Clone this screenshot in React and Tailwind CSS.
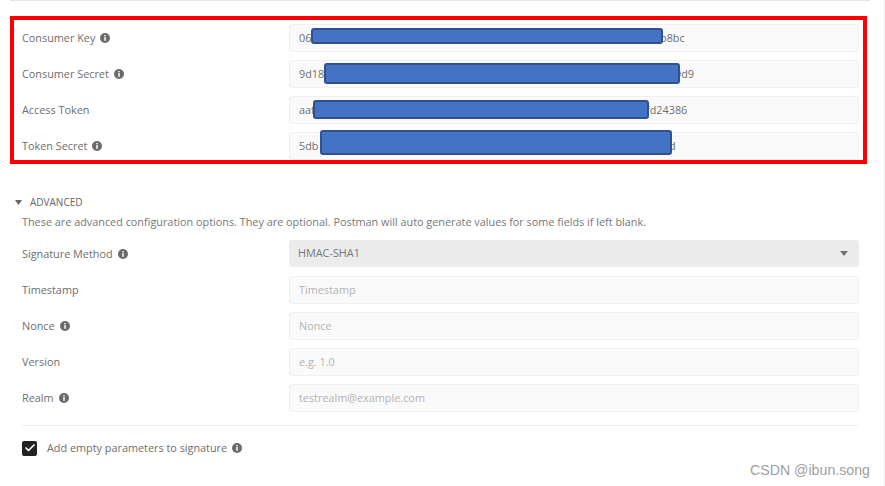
import { Check } from "lucide-react";

const CREDENTIALS = [
    { label: "Consumer Key", value: "06", end: "b8bc", info: true, width: "w-[361px]" },
    { label: "Consumer Secret", value: "9d18", end: "9d9", info: true, width: "w-[376px]" },
    { label: "Access Token", value: "aaf", end: "fd24386", info: false, width: "w-[347px]" },
    { label: "Token Secret", value: "5db", end: "d", info: true, width: "w-[370px]" },
];

const REDACTIONS = [
    "left-[311px] top-[28px] w-[352px] h-[16px]",
    "left-[324px] top-[63px] w-[356px] h-[21px]",
    "left-[313px] top-[100px] w-[336px] h-[19px]",
    "left-[320px] top-[130px] w-[352px] h-[25px]",
];

const ADVANCED = [
    { label: "Timestamp", placeholder: "Timestamp", info: false },
    { label: "Nonce", placeholder: "Nonce", info: true },
    { label: "Version", placeholder: "e.g. 1.0", info: false },
    { label: "Realm", placeholder: "testrealm@example.com", info: true },
];

const InfoIcon = () => (
    <svg width="10" height="10" viewBox="0 0 11 11" className="ml-[5px] shrink-0">
        <circle cx="5.5" cy="5.5" r="5.5" fill="#6b6b6b" />
        <rect x="4.7" y="2.2" width="1.6" height="1.4" fill="#fff" />
        <rect x="4.7" y="4.4" width="1.6" height="4.2" fill="#fff" />
    </svg>
);

const Row = ({ label, info, children }) => (
    <div className="flex h-7 mb-2 items-center">
        <div className="w-[267px] flex items-center text-[#6e6e6e]">
            <span>{label}</span>
            {info && <InfoIcon />}
        </div>
        {children}
    </div>
);

const FieldBox = ({ children, className = "text-[#6e6e6e]" }) => (
    <div className={`w-[570px] h-7 px-[9px] flex items-center bg-[#fafafa] border border-[#f0f0f0] rounded-[3px] ${className}`}>
        {children}
    </div>
);

export default function App() {
    return (
        <div className="relative w-[885px] h-[486px] overflow-hidden bg-white text-[10.85px] font-['Open_Sans',sans-serif] border-r border-[#ededed]">
            <div className="ml-[10px] w-[860px] h-px bg-[#e6e6e6]" />

            <div className="ml-[10px] mt-[15px] w-[857px] h-[148px] border-4 border-[#fe0000] pl-[8px] pt-[4px] overflow-hidden">
                {CREDENTIALS.map((row) => (
                    <Row key={row.label} label={row.label} info={row.info}>
                        <FieldBox>
                            <span className={row.width}>{row.value}</span>
                            <span>{row.end}</span>
                        </FieldBox>
                    </Row>
                ))}
            </div>

            <div className="ml-[15px] mt-[32px] flex items-center h-3 text-[#666666]">
                <svg width="7" height="5" viewBox="0 0 7 5">
                    <path d="M0 0h7L3.5 5z" fill="#666666" />
                </svg>
                <span className="ml-2 text-[10px] font-medium">ADVANCED</span>
            </div>
            <p className="ml-[22px] mt-[5px] h-[17px] leading-[17px] text-[#777777]">
                These are advanced configuration options. They are optional. Postman will auto generate values for some fields if left blank.
            </p>

            <div className="ml-[22px] mt-[10px]">
                <Row label="Signature Method" info>
                    <div className="w-[570px] h-[27px] -mt-px pl-[9px] pr-[11px] flex items-center justify-between bg-[#ececec] rounded-[3px] text-[#777777]">
                        <span>HMAC-SHA1</span>
                        <svg width="8" height="5" viewBox="0 0 8 5">
                            <path d="M0 0h8L4 5z" fill="#707070" />
                        </svg>
                    </div>
                </Row>
                {ADVANCED.map((row) => (
                    <Row key={row.label} label={row.label} info={row.info}>
                        <FieldBox className="text-[#b3b3b3]">{row.placeholder}</FieldBox>
                    </Row>
                ))}
                <div className="w-[837px] h-px mt-[13px] bg-[#eeeeee]" />
                <div className="flex items-center mt-[14px] text-[#6e6e6e]">
                    <div className="w-[15px] h-[15px] bg-[#222222] rounded-[2px] flex items-center justify-center">
                        <Check size={12} strokeWidth={3.5} color="#ffffff" />
                    </div>
                    <span className="ml-[10px]">Add empty parameters to signature</span>
                    <InfoIcon />
                </div>
            </div>

            {REDACTIONS.map((pos) => (
                <div key={pos} className={`absolute ${pos} bg-[#4472c4] border-2 border-[#2f528f] rounded-[3px]`} />
            ))}

            <div className="absolute right-[14px] bottom-[8px] text-[14.2px] leading-4 text-[#a0a0a0] font-['Liberation_Sans',sans-serif]">
                CSDN @ibun.song
            </div>
        </div>
    );
}
